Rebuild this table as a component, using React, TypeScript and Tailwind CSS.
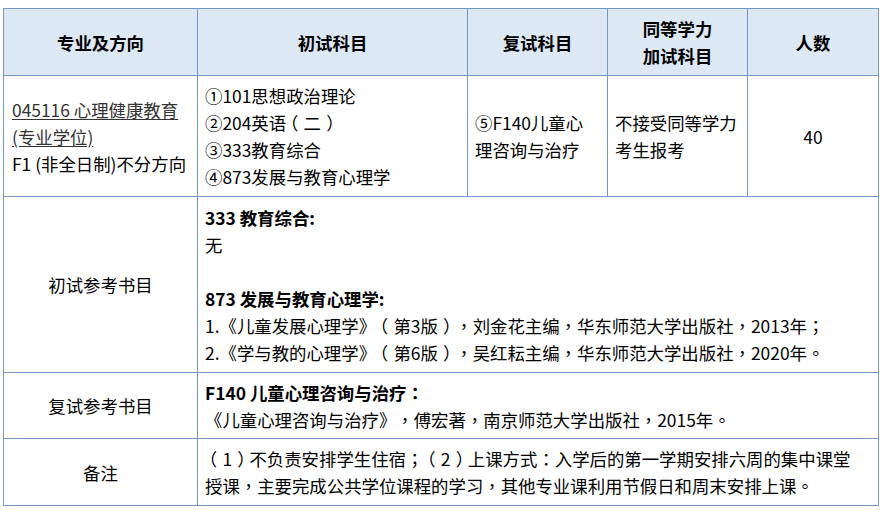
import React from "react";

const font = { fontFamily: '"Noto Sans CJK SC", "Microsoft YaHei", sans-serif' };

const PUNCT = "，。；：（）《》";

function cls(ch: string) {
  if (ch === "（") return "inline-block pl-[0.2em] pr-[0.3em] [font-feature-settings:'halt']";
  if (ch === "）") return "inline-block pl-[0.3em] pr-[0.2em] [font-feature-settings:'halt']";
  return "inline-block w-[1em] [font-family:'Noto_Sans_CJK_TC',sans-serif]";
}

function T({ s }: { s: string }) {
  const parts: React.ReactNode[] = [];
  let buf = "";
  let k = 0;
  for (const ch of s) {
    if (PUNCT.includes(ch)) {
      if (buf) parts.push(buf);
      buf = "";
      parts.push(
        <span key={k++} className={cls(ch)}>
          {ch}
        </span>
      );
    } else {
      buf += ch;
    }
  }
  if (buf) parts.push(buf);
  return <>{parts}</>;
}

export default function App() {
  const td = "border border-[#7698c8] px-[7px] align-middle";
  return (
    <div
      className="w-[883px] h-[510px] bg-white pt-[8px] pl-[3px] [text-spacing-trim:space-all]"
      style={font}
    >
      <table className="table-fixed border-collapse text-[17.4px] leading-[27px] text-black">
        <colgroup>
          <col className="w-[194px]" />
          <col className="w-[270px]" />
          <col className="w-[140px]" />
          <col className="w-[140px]" />
          <col className="w-[131px]" />
        </colgroup>
        <tbody>
          <tr className="h-[67px] bg-[#dde8f5] font-bold">
            <td className={`${td} text-center`}>专业及方向</td>
            <td className={`${td} text-center`}>初试科目</td>
            <td className={`${td} text-center`}>复试科目</td>
            <td className={`${td} text-center`}>
              同等学力
              <br />
              加试科目
            </td>
            <td className={`${td} text-center`}>人数</td>
          </tr>
          <tr className="h-[121px]">
            <td className={`${td} pl-[8px] whitespace-nowrap`}>
              <span className="underline text-[#333] underline-offset-[2px]">
                045116 心理健康教育
                <br />
                (专业学位)
              </span>
              <br />
              F1 (非全日制)不分方向
            </td>
            <td className={`${td} whitespace-nowrap`}>
              ①101思想政治理论
              <br />
              ②204英语<T s="（" />二<T s="）" />
              <br />
              ③333教育综合
              <br />
              ④873发展与教育心理学
            </td>
            <td className={`${td} whitespace-nowrap`}>
              ⑤F140儿童心
              <br />
              理咨询与治疗
            </td>
            <td className={`${td} whitespace-nowrap`}>
              不接受同等学力
              <br />
              考生报考
            </td>
            <td className={`${td} text-center`}>40</td>
          </tr>
          <tr className="h-[176px]">
            <td className={`${td} text-center`}>初试参考书目</td>
            <td className={`${td} whitespace-nowrap`} colSpan={4}>
              <div className="font-bold">333 教育综合:</div>
              <div>无</div>
              <div className="h-[27px]" />
              <div className="font-bold">873 发展与教育心理学:</div>
              <div>
                <T s="1.《儿童发展心理学》（第3版），刘金花主编，华东师范大学出版社，2013年；" />
              </div>
              <div>
                <T s="2.《学与教的心理学》（第6版），吴红耘主编，华东师范大学出版社，2020年。" />
              </div>
            </td>
          </tr>
          <tr className="h-[66px]">
            <td className={`${td} text-center`}>复试参考书目</td>
            <td className={`${td} whitespace-nowrap`} colSpan={4}>
              <div className="font-bold">
                F140 儿童心理咨询与治疗<T s="：" />
              </div>
              <div>
                <T s="《儿童心理咨询与治疗》，傅宏著，南京师范大学出版社，2015年。" />
              </div>
            </td>
          </tr>
          <tr className="h-[67px]">
            <td className={`${td} text-center`}>备注</td>
            <td className={`${td} whitespace-nowrap`} colSpan={4}>
              <T s="（1）不负责安排学生住宿；（2）上课方式：入学后的第一学期安排六周的集中课堂" />
              <br />
              <T s="授课，主要完成公共学位课程的学习，其他专业课利用节假日和周末安排上课。" />
            </td>
          </tr>
        </tbody>
      </table>
    </div>
  );
}
